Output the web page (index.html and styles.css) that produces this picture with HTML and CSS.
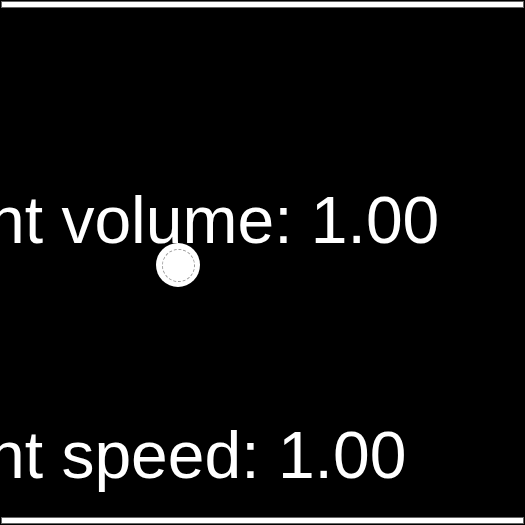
FILE: index.html
```html
<!DOCTYPE html>
<html>
<head>
<meta charset="utf-8">
<link rel="stylesheet" href="styles.css">
</head>
<body>
<div class="page">
  <div class="bar bar-top"></div>
  <div class="readout readout-volume">Current volume: 1.00</div>
  <div class="slider">
    <div class="thumb" style="left: 156px;"><div class="thumb-ring"></div></div>
  </div>
  <div class="readout readout-speed">Current speed: 1.00</div>
  <div class="bar bar-bottom"></div>
</div>
</body>
</html>
```
FILE: styles.css
```css
html, body {
  margin: 0;
  padding: 0;
  background: #000;
  overflow: hidden;
}
.page {
  width: 525px;
  height: 525px;
  overflow: hidden;
  display: flex;
  flex-direction: column;
}
.bar {
  height: 5px;
  margin: 0 1px;
  background: #fff;
  border: 1px solid #666;
  flex: none;
}
.bar-top {
  margin-top: 1px;
}
.readout {
  font-family: "Liberation Sans", Arial, sans-serif;
  font-size: 66px;
  line-height: 76px;
  color: #fff;
  white-space: nowrap;
  margin-left: -177px;
  flex: none;
}
.readout-volume {
  margin-top: 174px;
}
.slider {
  position: relative;
  height: 0;
  flex: none;
}
.thumb {
  position: absolute;
  top: -15px;
  width: 44px;
  height: 44px;
  border-radius: 50%;
  background: #fff;
  display: flex;
  align-items: center;
  justify-content: center;
}
.thumb-ring {
  width: 33px;
  height: 33px;
  box-sizing: border-box;
  border-radius: 50%;
  border: 1px dashed #999;
}
.readout-speed {
  margin-top: 159px;
}
.bar-bottom {
  margin-top: 24px;
}
```
